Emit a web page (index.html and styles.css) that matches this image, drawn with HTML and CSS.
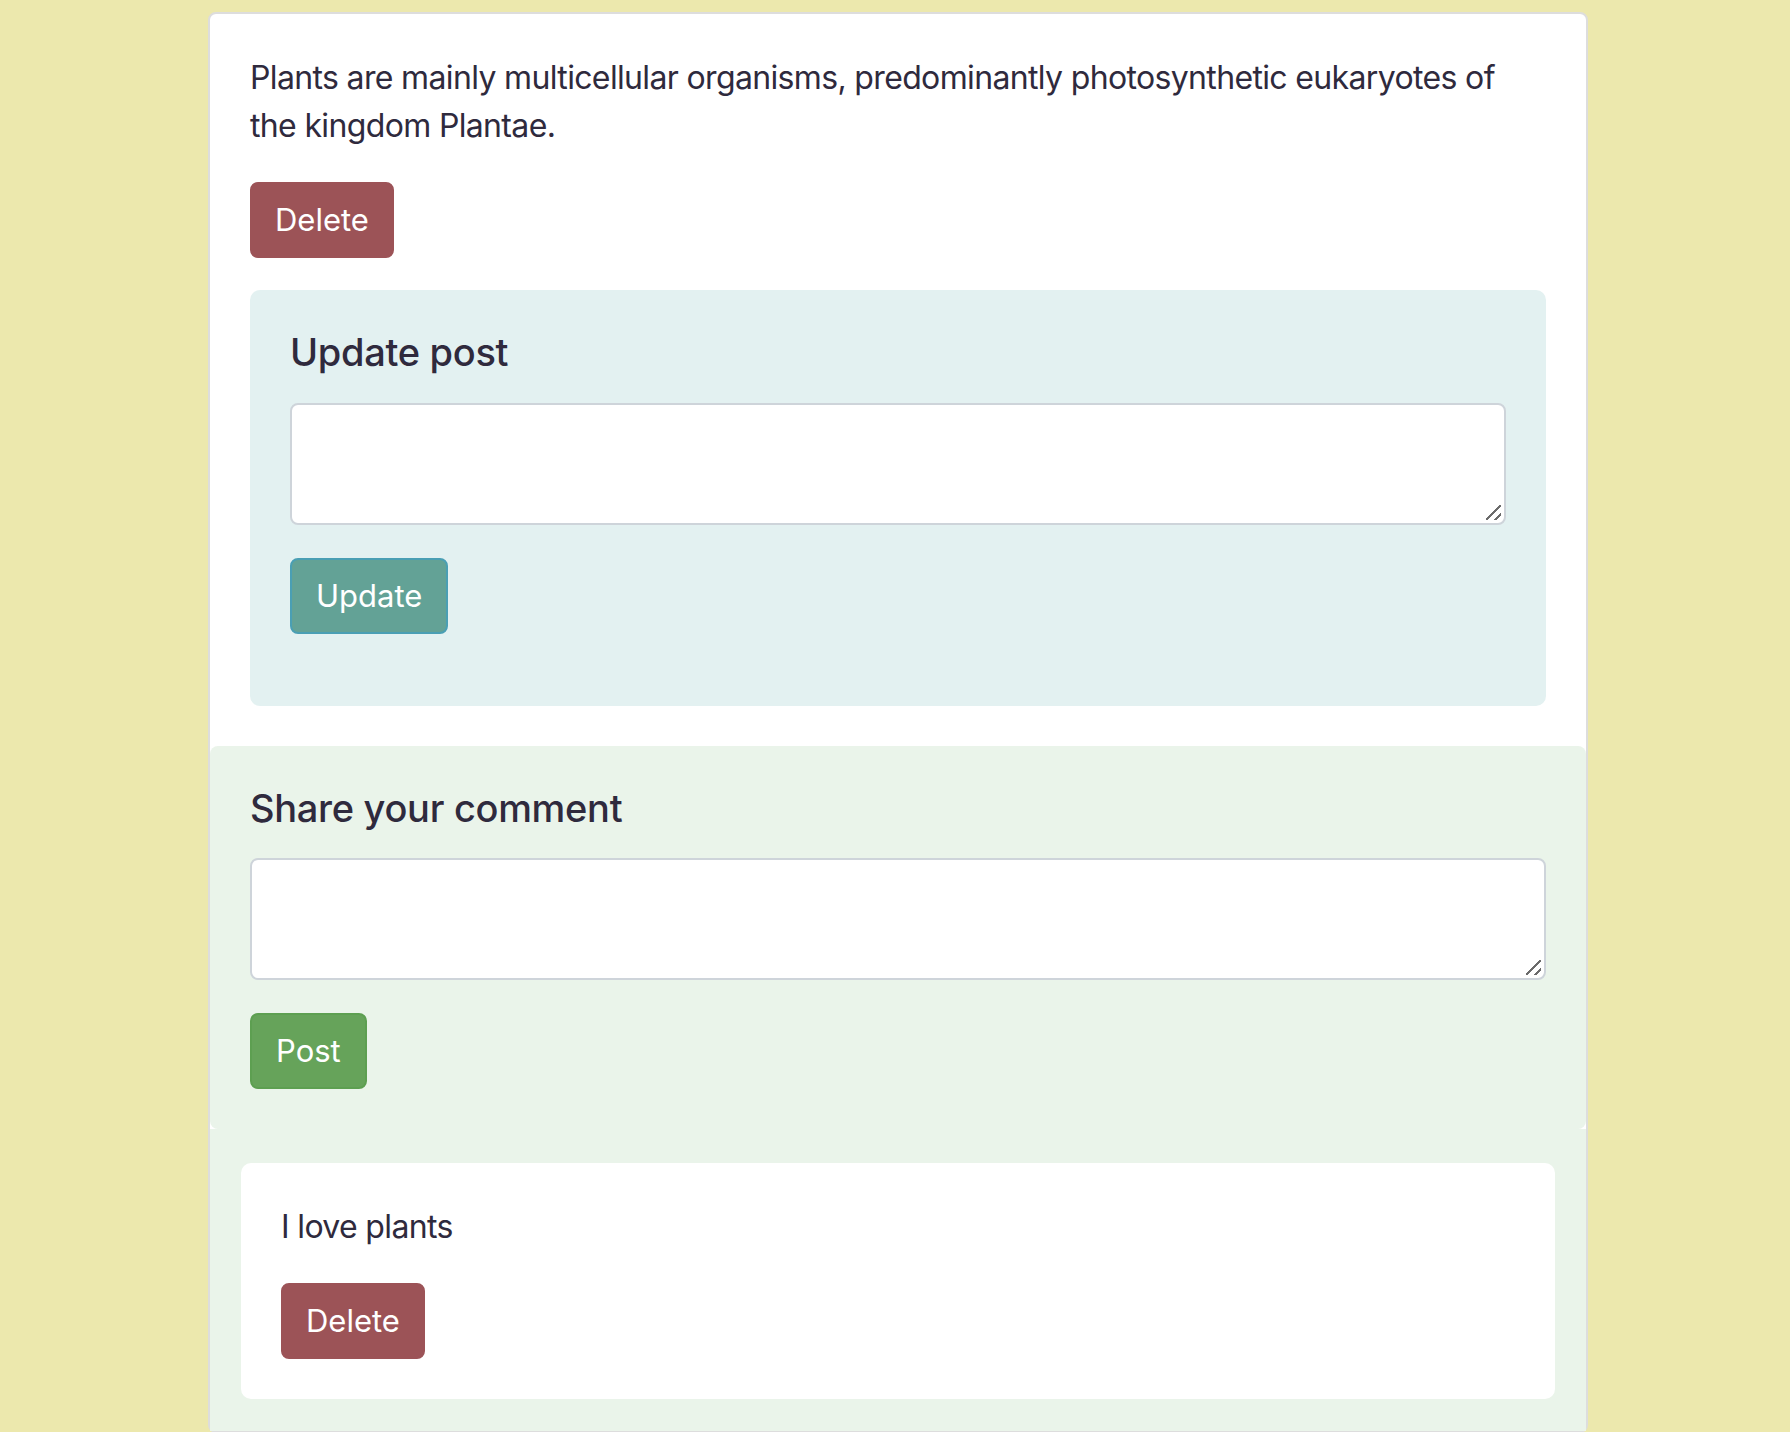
FILE: index.html
```html
<!DOCTYPE html>
<html lang="en">
<head>
<meta charset="utf-8">
<title>Post</title>
<link rel="stylesheet" href="styles.css">
</head>
<body>
<div class="page">
  <div class="card">
    <div class="card-body">
      <p class="post-text">Plants are mainly multicellular organisms, predominantly photosynthetic eukaryotes of the kingdom Plantae.</p>
      <button class="btn btn-delete">Delete</button>
      <form class="update-panel">
        <h5 class="section-title">Update post</h5>
        <textarea class="field" rows="2"></textarea>
        <button type="button" class="btn btn-update">Update</button>
      </form>
    </div>
    <form class="comment-form">
      <h5 class="section-title">Share your comment</h5>
      <textarea class="field" rows="2"></textarea>
      <button type="button" class="btn btn-post">Post</button>
    </form>
    <div class="comments">
      <div class="comment">
        <p class="comment-text">I love plants</p>
        <button class="btn btn-delete">Delete</button>
      </div>
    </div>
  </div>
</div>
</body>
</html>
```
FILE: styles.css
```css
html, body {
  margin: 0;
  padding: 0;
}
body {
  background: #ece8ad;
  font-family: Inter, "Noto Sans", "Liberation Sans", sans-serif;
  color: #2f2a3d;
}
.page {
  padding: 12px 0 0 208px;
}
.card {
  width: 1380px;
  box-sizing: border-box;
  background: #fff;
  border: 2px solid #dddddd;
  border-radius: 8px;
}
.card-body {
  padding: 40px;
}
.post-text,
.comment-text {
  margin: 0 0 32px;
  font-size: 32px;
  line-height: 48px;
  letter-spacing: -0.65px;
}
.btn {
  display: block;
  font-family: Inter, "Noto Sans", "Liberation Sans", sans-serif;
  font-size: 31px;
  line-height: 48px;
  padding: 12px 24px;
  border: 2px solid transparent;
  border-radius: 8px;
  color: #fff;
  cursor: pointer;
}
.btn-delete {
  background: #9c5357;
  border-color: #9c5357;
  padding: 12px 23px;
}
.btn-update {
  background: #63a296;
  border-color: #4a9fb4;
  margin-top: 33px;
}
.btn-post {
  background: #66a35a;
  border-color: #5d9f51;
  margin-top: 33px;
}
.update-panel {
  margin: 32px 0 0;
  background: #e3f1f1;
  border-radius: 10px;
  padding: 40px 40px 72px;
}
.section-title {
  margin: 0 0 27px;
  font-size: 38px;
  line-height: 45.6px;
  font-weight: 500;
  letter-spacing: -0.3px;
}
.field {
  display: block;
  width: 100%;
  height: 122px;
  box-sizing: border-box;
  margin: 0;
  padding: 12px 24px;
  border: 2px solid #ced4da;
  border-radius: 8px;
  font-family: inherit;
  font-size: 32px;
  resize: none;
  background-color: #fff;
  background-image:
    linear-gradient(135deg, transparent 0 calc(50% - 1px), #6b6b6b calc(50% - 1px) calc(50% + 1px), transparent calc(50% + 1px)),
    linear-gradient(135deg, transparent 0 calc(80% - 1px), #6b6b6b calc(80% - 1px) calc(80% + 1px), transparent calc(80% + 1px));
  background-size: 15px 15px, 15px 15px;
  background-position: right 3px bottom 3px, right 3px bottom 3px;
  background-repeat: no-repeat;
}
.comment-form {
  margin: 0;
  background: #eaf4ea;
  border-radius: 8px;
  padding: 40px;
}
.comments {
  background: #eaf4ea;
  padding: 34px 31px 32px;
}
.comment {
  background: #fff;
  border-radius: 10px;
  padding: 40px;
}
```
